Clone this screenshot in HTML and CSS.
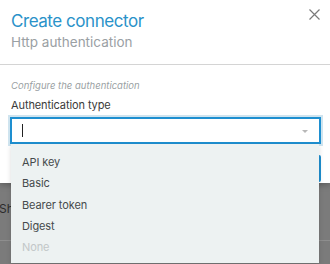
FILE: index.html
```html
<!DOCTYPE html>
<html>
<head>
<meta charset="utf-8">
<link rel="stylesheet" href="styles.css">
</head>
<body>
<div class="modal">
  <div class="header">
    <div class="titles">
      <div class="title">Create connector</div>
      <div class="subtitle">Http authentication</div>
    </div>
    <svg class="close" width="11" height="11" viewBox="0 0 11 11"><path d="M0.5 0.5L10.5 10.5M10.5 0.5L0.5 10.5" stroke="#7a7a7a" stroke-width="1.2" fill="none"/></svg>
  </div>
  <div class="body">
    <div class="hint">Configure the authentication</div>
    <div class="label">Authentication type</div>
    <div class="select-wrap">
      <div class="select">
        <span class="caret"></span>
        <span class="arrow"></span>
      </div>
      <ul class="menu">
        <li>API key</li>
        <li>Basic</li>
        <li>Bearer token</li>
        <li>Digest</li>
        <li class="disabled">None</li>
      </ul>
    </div>
    <div class="footer">
      <div class="btn"></div>
    </div>
  </div>
</div>
<div class="page">
  <div class="page-row">Sh</div>
  <div class="page-line"></div>
</div>
</body>
</html>
```
FILE: styles.css
```css
* { box-sizing: border-box; }
html, body { margin: 0; padding: 0; }
body {
  width: 330px;
  height: 264px;
  overflow: hidden;
  background: #7b7b7b;
  font-family: Inter, "Open Sans", "Liberation Sans", sans-serif;
}
.modal {
  background: #fff;
  height: 183px;
  position: relative;
  z-index: 2;
  box-shadow: 0 2px 6px rgba(0,0,0,0.25);
}
.header {
  display: flex;
  justify-content: space-between;
  padding: 11px 10px 0 11px;
  height: 65px;
  border-bottom: 1px solid #d4d4d4;
}
.title {
  font-size: 17px;
  line-height: 21px;
  color: #2a92c9;
  letter-spacing: -0.45px;
}
.subtitle {
  font-size: 13.5px;
  line-height: 18px;
  color: #9aa0a4;
  margin-top: 1px;
}
.close { margin-top: -2px; }
.body {
  padding: 14px 9px 0 10px;
}
.hint {
  font-size: 9.5px;
  font-style: italic;
  color: #9a9fa3;
  line-height: 13px;
  padding-left: 1px;
}
.label {
  font-size: 11px;
  color: #3a3a3a;
  line-height: 14px;
  margin-top: 6px;
  padding-left: 1px;
  letter-spacing: -0.1px;
}
.select-wrap {
  position: relative;
  margin-top: 5px;
}
.select {
  height: 27px;
  border: 2px solid #1e8fd0;
  box-shadow: 0 0 0 2px #cfe4ef;
  display: flex;
  align-items: center;
  justify-content: space-between;
  padding: 0 11px 0 10px;
  background: #fff;
}
.caret {
  width: 1px;
  height: 13px;
  background: #222;
}
.arrow {
  width: 0;
  height: 0;
  border-left: 3px solid transparent;
  border-right: 3px solid transparent;
  border-top: 3px solid #b8b8b8;
  margin-top: 1px;
}
.menu {
  position: absolute;
  left: 1px;
  top: 27px;
  width: 308px;
  margin: 0;
  padding: 8px 0 5px;
  list-style: none;
  background: #edf2f2;
  box-shadow: 0 2px 5px rgba(0,0,0,0.15);
  z-index: 5;
}
.menu li {
  font-size: 11px;
  line-height: 21.3px;
  color: #454a4c;
  padding-left: 11px;
  letter-spacing: -0.1px;
}
.menu li.disabled { color: #c2c7c8; }
.footer {
  display: flex;
  justify-content: flex-end;
  margin-top: 11px;
}
.btn {
  width: 80px;
  height: 27px;
  border: 2px solid #1e8fd0;
  border-radius: 2px;
}
.page {
  height: 81px;
  position: relative;
}
.page-row {
  font-size: 12px;
  color: #2c2c2c;
  line-height: 18px;
  padding-top: 17px;
  margin-left: -1px;
}
.page-line {
  margin-top: 22px;
  height: 1px;
  background: #8e8e8e;
}
```
